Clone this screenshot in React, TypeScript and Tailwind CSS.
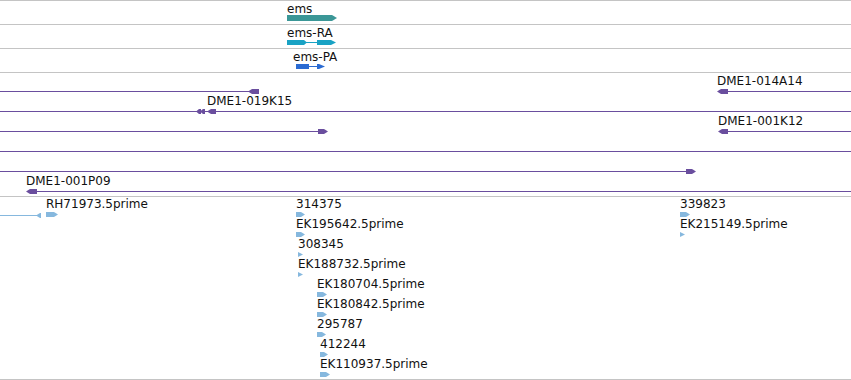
import React from "react";

type Shape =
  | { k: "line"; x1: number; x2: number; y: number; c: string }
  | { k: "rect"; x1: number; x2: number; y: number; h: number; c: string }
  | { k: "ar"; x1: number; x2: number; y: number; h: number; c: string; tip?: number }
  | { k: "al"; x1: number; x2: number; y: number; h: number; c: string; tip?: number };

type Label = { text: string; x: number; y: number };

const PURPLE = "#6a4e9e";
const EST = "#86b8de";

function pts(s: Shape): string {
  if (s.k === "ar") {
    const t = s.tip ?? 4;
    return `${s.x1},${s.y} ${s.x2 - t},${s.y} ${s.x2},${s.y + s.h / 2} ${s.x2 - t},${s.y + s.h} ${s.x1},${s.y + s.h}`;
  }
  if (s.k === "al") {
    const t = s.tip ?? 4;
    return `${s.x1},${s.y + s.h / 2} ${s.x1 + t},${s.y} ${s.x2},${s.y} ${s.x2},${s.y + s.h} ${s.x1 + t},${s.y + s.h}`;
  }
  return "";
}

function Track({ h, shapes, labels }: { h: number; shapes: Shape[]; labels: Label[] }) {
  return (
    <div className="relative w-full" style={{ height: h }}>
      <svg className="absolute left-0 top-0" width={851} height={h} viewBox={`0 0 851 ${h}`}>
        {shapes.map((s, i) => {
          if (s.k === "line")
            return <rect key={i} x={s.x1} y={s.y} width={s.x2 - s.x1} height={1} fill={s.c} shapeRendering="crispEdges" />;
          if (s.k === "rect")
            return <rect key={i} x={s.x1} y={s.y} width={s.x2 - s.x1} height={s.h} fill={s.c} shapeRendering="crispEdges" />;
          return <polygon key={i} points={pts(s)} fill={s.c} />;
        })}
      </svg>
      {labels.map((l, i) => (
        <div
          key={i}
          className="absolute whitespace-nowrap font-['DejaVu_Sans',sans-serif] text-[12px] leading-[14px] text-[#111]"
          style={{ left: l.x, top: l.y }}
        >
          {l.text}
        </div>
      ))}
    </div>
  );
}

function Sep() {
  return <div className="h-px w-full bg-[#c4c4c4]" />;
}

const bacRows = [18, 38, 58, 78, 98, 118];

const bacShapes: Shape[] = [
  { k: "line", x1: 0, x2: 250, y: 18, c: PURPLE },
  { k: "al", x1: 248, x2: 259, y: 16, h: 5, c: PURPLE },
  { k: "line", x1: 722, x2: 851, y: 18, c: PURPLE },
  { k: "al", x1: 717, x2: 728, y: 16, h: 5, c: PURPLE },
  { k: "line", x1: 0, x2: 851, y: 38, c: PURPLE },
  { k: "al", x1: 196, x2: 201, y: 36, h: 5, c: PURPLE, tip: 3 },
  { k: "al", x1: 200, x2: 205, y: 36, h: 5, c: PURPLE, tip: 3 },
  { k: "al", x1: 207, x2: 216, y: 36, h: 5, c: PURPLE },
  { k: "line", x1: 0, x2: 320, y: 58, c: PURPLE },
  { k: "ar", x1: 318, x2: 328, y: 56, h: 5, c: PURPLE },
  { k: "line", x1: 722, x2: 851, y: 58, c: PURPLE },
  { k: "al", x1: 718, x2: 728, y: 56, h: 5, c: PURPLE },
  { k: "line", x1: 0, x2: 851, y: 78, c: PURPLE },
  { k: "line", x1: 0, x2: 688, y: 98, c: PURPLE },
  { k: "ar", x1: 686, x2: 696, y: 96, h: 5, c: PURPLE },
  { k: "line", x1: 30, x2: 851, y: 118, c: PURPLE },
  { k: "al", x1: 26, x2: 37, y: 116, h: 5, c: PURPLE },
];

const bacLabels: Label[] = [
  { text: "DME1-014A14", x: 717, y: 1 },
  { text: "DME1-019K15", x: 207, y: 21 },
  { text: "DME1-001K12", x: 718, y: 41 },
  { text: "DME1-001P09", x: 26, y: 101 },
];

const estItems: { text: string; x: number; row: number; x2: number }[] = [
  { text: "RH71973.5prime", x: 46, row: 0, x2: 58 },
  { text: "314375", x: 296, row: 0, x2: 305 },
  { text: "339823", x: 680, row: 0, x2: 690 },
  { text: "EK195642.5prime", x: 296, row: 1, x2: 305 },
  { text: "EK215149.5prime", x: 680, row: 1, x2: 685 },
  { text: "308345", x: 298, row: 2, x2: 303 },
  { text: "EK188732.5prime", x: 298, row: 3, x2: 303 },
  { text: "EK180704.5prime", x: 317, row: 4, x2: 327 },
  { text: "EK180842.5prime", x: 317, row: 5, x2: 327 },
  { text: "295787", x: 317, row: 6, x2: 326 },
  { text: "412244", x: 320, row: 7, x2: 328 },
  { text: "EK110937.5prime", x: 320, row: 8, x2: 330 },
];

const estShapes: Shape[] = [
  { k: "line", x1: 0, x2: 38, y: 18, c: EST },
  { k: "al", x1: 36, x2: 41, y: 16, h: 5, c: EST, tip: 4 },
  ...estItems.map(
    (e): Shape => ({
      k: "ar",
      x1: e.x,
      x2: e.x2,
      y: 15 + e.row * 20,
      h: 5,
      c: EST,
      tip: e.x2 - e.x <= 5 ? 5 : 4,
    })
  ),
];

const estLabels: Label[] = estItems.map((e) => ({ text: e.text, x: e.x, y: e.row * 20 }));

export default function App() {
  void bacRows;
  return (
    <div className="flex h-[380px] w-[851px] flex-col overflow-hidden bg-white">
      <Sep />
      <Track
        h={23}
        shapes={[{ k: "ar", x1: 287, x2: 337, y: 14, h: 6, c: "#3b9797", tip: 5 }]}
        labels={[{ text: "ems", x: 287, y: 1 }]}
      />
      <Sep />
      <Track
        h={23}
        shapes={[
          { k: "ar", x1: 287, x2: 307, y: 15, h: 5, c: "#19a2c4", tip: 3 },
          { k: "line", x1: 305, x2: 318, y: 17, c: "#19a2c4" },
          { k: "ar", x1: 317, x2: 336, y: 15, h: 5, c: "#19a2c4", tip: 5 },
        ]}
        labels={[{ text: "ems-RA", x: 287, y: 1 }]}
      />
      <Sep />
      <Track
        h={23}
        shapes={[
          { k: "rect", x1: 296, x2: 309, y: 15, h: 5, c: "#2b6bd2" },
          { k: "line", x1: 308, x2: 319, y: 17, c: "#2b6bd2" },
          { k: "ar", x1: 317, x2: 325, y: 15, h: 5, c: "#2b6bd2", tip: 6 },
        ]}
        labels={[{ text: "ems-PA", x: 293, y: 1 }]}
      />
      <Sep />
      <Track h={123} shapes={bacShapes} labels={bacLabels} />
      <Sep />
      <Track h={182} shapes={estShapes} labels={estLabels} />
      <Sep />
    </div>
  );
}
